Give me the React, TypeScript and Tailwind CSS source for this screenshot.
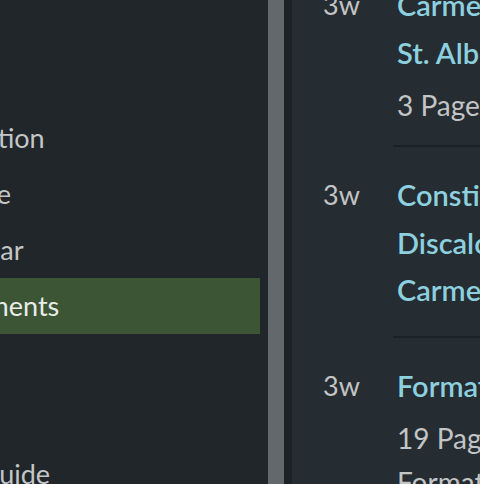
import React from 'react';

interface NavItem {
  label: string;
  offset: string;
  active?: boolean;
}

interface DocItem {
  age: string;
  title: string[];
  meta?: string;
  summary?: string;
}

const navItems: NavItem[] = [
  { label: 'Formation', offset: '-ml-[77px]' },
  { label: 'Home', offset: '-ml-[61px]' },
  { label: 'Calendar', offset: '-ml-[82px]' },
  { label: 'Documents', offset: '-ml-[77px]', active: true },
  { label: 'Members', offset: '-ml-[140px]' },
  { label: 'Prayers', offset: '-ml-[140px]' },
  { label: 'Style guide', offset: '-ml-[80px]' },
];

const docs: DocItem[] = [
  { age: '3w', title: ['Carmelite Rule of', 'St. Albert'], meta: '3 Pages' },
  { age: '3w', title: ['Constitutions of the', 'Discalced', 'Carmelites'] },
  {
    age: '3w',
    title: ['Formation Guide'],
    meta: '19 Pages',
    summary: 'Formation program for the Secular Order',
  },
];

const Sidebar = () => (
  <aside className="w-[268px] shrink-0 overflow-hidden bg-[#20262a] pt-[110px]">
    <ul>
      {navItems.map((item) => (
        <li
          key={item.label}
          className={
            item.active
              ? 'mr-2 flex h-14 items-center bg-[#3b5535] text-[#e9ebea]'
              : 'mr-2 flex h-14 items-center text-[#c3c5c6]'
          }
        >
          <span className={`whitespace-nowrap text-[27px] ${item.offset}`}>{item.label}</span>
        </li>
      ))}
    </ul>
  </aside>
);

const DocRow = ({ doc }: { doc: DocItem }) => (
  <div className="flex">
    <div className="w-[70px] shrink-0 text-[27px] leading-[47.5px] text-[#c2c4c5]">{doc.age}</div>
    <div className="min-w-0 flex-1 border-b-2 border-[#1b2024] pb-[22px]">
      <div className="pl-[4px] text-[29px] font-semibold leading-[47.5px] text-[#8dd0df]">
        {doc.title.map((line) => (
          <div key={line} className="whitespace-nowrap">
            {line}
          </div>
        ))}
      </div>
      {doc.meta && (
        <div className="mt-[11px] flex flex-col gap-2 pl-[4px] text-[28px] leading-[36px] text-[#c2c4c5]">
          <div className="whitespace-nowrap">{doc.meta}</div>
          {doc.summary && <div className="whitespace-nowrap">{doc.summary}</div>}
        </div>
      )}
    </div>
  </div>
);

export default function App() {
  return (
    <div className="flex h-[484px] w-[480px] overflow-hidden font-['Lato',sans-serif]">
      <Sidebar />
      <div className="w-4 shrink-0 bg-[#62686b]" />
      <div className="w-2 shrink-0 bg-[#1c2226]" />
      <main className="min-w-0 flex-1 overflow-hidden bg-[#262d32] pl-[31px]">
        <div className="-mt-[19px] flex flex-col gap-6">
          {docs.map((doc, i) => (
            <DocRow key={i} doc={doc} />
          ))}
        </div>
      </main>
    </div>
  );
}
